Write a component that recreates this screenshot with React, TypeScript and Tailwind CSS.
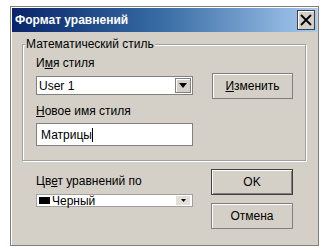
export default function App() {
  return (
    <div className="w-[328px] h-[252px] bg-white pl-[10px] pt-[6px]" style={{ fontFamily: '"Liberation Sans", Arial, sans-serif' }}>
      <div className="w-[309px] h-[240px] bg-[#d4d0c8] border border-[#808080] shadow-[inset_1px_1px_0_#ffffff] flex flex-col">
        {/* TITLE BAR */}
        <div className="h-[24px] mx-[1px] mt-[1px] flex items-center justify-between bg-gradient-to-r from-[#0a246a] via-[#3a6ea5] to-[#a6caf0] pl-[3px] pr-[2px]">
          <span className="text-white font-bold text-[12px]">Формат уравнений</span>
          <div className="w-[18px] h-[20px] bg-[#d4d0c8] border border-[#404040] flex items-center justify-center shadow-[inset_1px_1px_0_#ffffff]">
            <svg width="12" height="12" viewBox="0 0 12 12">
              <path d="M1 1 L11 11 M11 1 L1 11" stroke="#000" strokeWidth="1.8" />
            </svg>
          </div>
        </div>

        <div className="flex-1 px-[11px] pt-[10px] text-[12px] text-black">
          {/* GROUP BOX */}
          <div className="relative h-[117px] w-[284px] mt-[2px] border border-[#a0a0a0] shadow-[1px_1px_0_#ffffff,inset_1px_1px_0_#ffffff]">
            <span className="absolute -top-[9px] left-[2px] bg-[#d4d0c8] px-[1px] leading-[16px]">Математический стиль</span>
            <div className="flex pt-[10px] pl-[13px]">
              <div className="flex flex-col w-[157px]">
                <span className="leading-[16px]">И<u>м</u>я стиля</span>
                <div className="mt-[5px] h-[19px] bg-white border border-[#808080] flex items-center justify-between">
                  <span className="pl-[2px] leading-[16px]">User 1</span>
                  <div className="w-[16px] h-[15px] mr-[1px] bg-[#d4d0c8] border border-[#808080] shadow-[inset_1px_1px_0_#ffffff] flex items-center justify-center">
                    <svg width="8" height="5" viewBox="0 0 8 5"><path d="M0 0 H8 L4 5 Z" fill="#000" /></svg>
                  </div>
                </div>
                <span className="mt-[8px] leading-[16px]"><u>Н</u>овое имя стиля</span>
                <div className="mt-[4px] h-[23px] bg-white border border-[#808080] flex items-center pl-[4px]">
                  <span className="leading-[16px]">Матрицы</span>
                  <span className="w-[1px] h-[14px] bg-black" />
                </div>
              </div>
              <div className="ml-[19px] mt-[18px] w-[81px] h-[26px] border border-[#808080] bg-[#d4d0c8] shadow-[inset_1px_1px_0_#ffffff] flex items-center justify-center">
                <span><u>И</u>зменить</span>
              </div>
            </div>
          </div>

          {/* BOTTOM */}
          <div className="flex pl-[14px]">
            <div className="flex flex-col w-[157px] pt-[12px]">
              <span className="leading-[16px]">Цв<u>е</u>т уравнений по</span>
              <div className="mt-[5px] h-[13px] bg-white border border-[#a0a0a0] flex items-center justify-between">
                <div className="flex items-center pl-[2px]">
                  <span className="w-[11px] h-[7px] bg-black mr-[2px]" />
                  <span className="leading-[12px]">Черный</span>
                </div>
                <div className="w-[14px] h-[9px] mr-[2px] bg-[#e4e0d8] flex items-center justify-center">
                  <svg width="5" height="3" viewBox="0 0 5 3"><path d="M0 0 H5 L2.5 3 Z" fill="#000" /></svg>
                </div>
              </div>
            </div>
            <div className="ml-[18px] flex flex-col gap-[8px] pt-[8px]">
              <div className="w-[82px] h-[26px] border border-[#404040] bg-[#d4d0c8] shadow-[inset_1px_1px_0_#ffffff,inset_-1px_-1px_0_#808080] flex items-center justify-center">OK</div>
              <div className="w-[82px] h-[26px] border border-[#808080] bg-[#d4d0c8] shadow-[inset_1px_1px_0_#ffffff] flex items-center justify-center">Отмена</div>
            </div>
          </div>
        </div>
      </div>
    </div>
  );
}
